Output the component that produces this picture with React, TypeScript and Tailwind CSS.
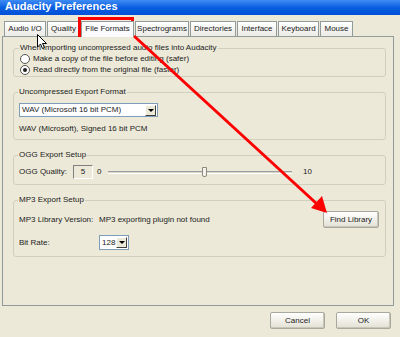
import React from 'react';

const tabs = [
  { t: 'Audio I/O', w: 'w-[42px]' },
  { t: 'Quality', w: 'w-[33px]' },
  { t: 'File Formats', w: 'w-[53px]' },
  { t: 'Spectrograms', w: 'w-[54px]' },
  { t: 'Directories', w: 'w-[46px]' },
  { t: 'Interface', w: 'w-[40px]' },
  { t: 'Keyboard', w: 'w-[41px]' },
  { t: 'Mouse', w: 'w-[33px]' },
];

function Group({ title, className, children }: { title: string; className?: string; children: React.ReactNode }) {
  return (
    <fieldset className={`rounded-[3px] border border-[#d0d0bf] px-[5px] ${className ?? ''}`}>
      <legend className="-ml-px whitespace-nowrap px-[1px] leading-[10px] text-[#222]">{title}</legend>
      {children}
    </fieldset>
  );
}

function Radio({ checked, label }: { checked?: boolean; label: string }) {
  return (
    <div className="flex h-[10px] items-center gap-[3px] whitespace-nowrap">
      <span className="flex h-[10px] w-[10px] items-center justify-center rounded-full border border-[#555] bg-white">
        {checked && <span className="h-[4px] w-[4px] rounded-full bg-[#222]"></span>}
      </span>
      <span>{label}</span>
    </div>
  );
}

function Combo({ value, className }: { value: string; className?: string }) {
  return (
    <div className={`flex items-center overflow-hidden border border-[#7f9db9] bg-white ${className ?? ''}`}>
      <span className="flex-1 whitespace-nowrap pl-[2px]">{value}</span>
      <span className="mr-[1px] flex h-[11px] w-[11px] shrink-0 items-center justify-center border border-b-[#404040] border-l-white border-r-[#404040] border-t-white bg-[#ece9d8]">
        <span className="h-0 w-0 border-x-[3px] border-t-[3px] border-x-transparent border-t-black"></span>
      </span>
    </div>
  );
}

function XpButton({ label, className }: { label: string; className?: string }) {
  return (
    <button className={`h-[17px] whitespace-nowrap rounded-[2px] border border-[#a8a89c] bg-gradient-to-b from-white to-[#e3e1d4] text-[8px] text-[#222] shadow-[inset_-1px_-1px_0_#c8c6b8] ${className ?? ''}`}>
      {label}
    </button>
  );
}

export default function App() {
  return (
    <div
      className="relative h-[337px] w-[400px] overflow-hidden bg-[#ece9d8] text-[8px] leading-[10px] text-[#222]"
      style={{ fontFamily: '"Liberation Sans", Arial, sans-serif' }}
    >
      <div className="h-[15px] bg-gradient-to-b from-[#3d8cf5] via-[#0a5fe0] to-[#0050d8] pl-[5px] text-[11px] font-bold leading-[12px] text-white">
        Audacity Preferences
      </div>

      <div className="flex pl-[4px] pt-[6px]">
        {tabs.map(({ t, w }) => (
          <div
            key={t}
            className={`${w} h-[15px] whitespace-nowrap border border-b-0 border-[#919b9c] text-center leading-[14px] ${
              t === 'File Formats' ? 'z-10 -mb-px h-[16px] bg-[#fcfcfe]' : 'bg-gradient-to-b from-white to-[#ecebe6]'
            } ${t === 'Audio I/O' ? '' : 'ml-[1px]'}`}
          >
            {t}
          </div>
        ))}
      </div>

      <div className="mx-[2px] flex h-[270px] w-[392px] flex-col border border-[#919b9c] bg-[#ece9d8] pl-[10px] pr-[7px] pt-[6px]">
        <Group title="When importing uncompressed audio files into Audacity" className="h-[34px] pl-[6px]">
          <div className="mt-[1px] flex flex-col gap-[1px]">
            <Radio label="Make a copy of the file before editing (safer)" />
            <Radio checked label="Read directly from the original file (faster)" />
          </div>
        </Group>

        <Group title="Uncompressed Export Format" className="mt-[10px] h-[53px]">
          <Combo value="WAV (Microsoft 16 bit PCM)" className="mt-[6px] h-[14px] w-[139px]" />
          <div className="mt-[7px] whitespace-nowrap">WAV (Microsoft), Signed 16 bit PCM</div>
        </Group>

        <Group title="OGG Export Setup" className="mt-[10px] h-[35px]">
          <div className="mt-[5px] flex h-[14px] items-center whitespace-nowrap">
            <span className="w-[54px]">OGG Quality:</span>
            <span className="flex h-[14px] w-[20px] items-center justify-center border border-[#808080] border-b-white border-r-white">5</span>
            <span className="ml-[4px] w-[11px]">0</span>
            <div className="relative h-[12px] w-[184px]">
              <div className="absolute left-0 right-0 top-[5px] h-[3px] border-b border-t border-b-white border-t-[#9d9d9d] bg-[#d8d6c8]"></div>
              <div className="absolute left-[94px] top-[1px] h-[10px] w-[5px] rounded-b-[2px] border border-[#8a8a80] bg-[#f4f3ee]"></div>
            </div>
            <span className="ml-[11px]">10</span>
          </div>
        </Group>

        <Group title="MP3 Export Setup" className="mt-[10px] h-[62px]">
          <div className="mt-[6px] flex h-[17px] items-center whitespace-nowrap">
            <span className="w-[80px]">MP3 Library Version:</span>
            <span>MP3 exporting plugin not found</span>
            <XpButton label="Find Library" className="ml-auto mr-[1px] w-[56px]" />
          </div>
          <div className="mt-[7px] flex items-center whitespace-nowrap">
            <span className="w-[80px]">Bit Rate:</span>
            <Combo value="128" className="h-[15px] w-[30px]" />
          </div>
        </Group>
      </div>

      <div className="mt-[6px] flex justify-end gap-[11px] pr-[9px]">
        <XpButton label="Cancel" className="w-[55px]" />
        <XpButton label="OK" className="w-[55px]" />
      </div>

      <svg className="pointer-events-none absolute left-0 top-0" width="400" height="337">
        <rect x="79.5" y="18.5" width="53" height="17" fill="none" stroke="#ff0000" strokeWidth="3" />
        <line x1="134" y1="36" x2="317" y2="204" stroke="#ff0000" strokeWidth="3" />
        <polygon points="327,213 311,208 322,196" fill="#ff0000" />
        <path d="M37.5 34.5 L37.5 47 L40.5 44 L42.5 48.5 L44.5 47.5 L42.5 43.5 L46.5 43.5 Z" fill="white" stroke="black" strokeWidth="1" />
      </svg>
    </div>
  );
}
